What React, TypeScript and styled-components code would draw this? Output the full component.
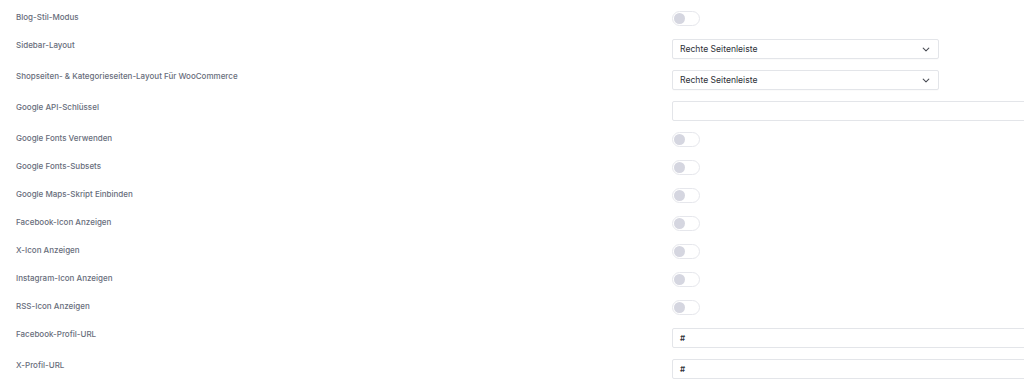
import React from "react";
import styled, { createGlobalStyle } from "styled-components";

const Global = createGlobalStyle`
  html, body { margin: 0; padding: 0; background: #ffffff; }
  body { font-family: Inter, "Noto Sans", sans-serif; overflow: hidden; }
`;

const Page = styled.div`
  display: flex;
  flex-direction: column;
  padding: 11px 0 0 16px;
  width: 1008px;
`;

const Row = styled.div<{ $kind: "toggle" | "field" }>`
  display: flex;
  align-items: flex-start;
  padding-bottom: ${(p) => (p.$kind === "toggle" ? "13px" : "11px")};
`;

const Label = styled.div`
  width: 656px;
  flex-shrink: 0;
  font-size: 8px;
  line-height: 11px;
  font-weight: 500;
  color: #676d7b;
  margin-top: 1px;
`;

const Switch = styled.div`
  box-sizing: border-box;
  width: 28px;
  height: 15px;
  border: 1px solid #e6e7ec;
  border-radius: 8px;
  background: #ffffff;
  display: flex;
  align-items: center;
  padding-left: 1px;
`;

const Knob = styled.span`
  width: 11px;
  height: 11px;
  border-radius: 50%;
  background: #d5d6e0;
`;

const Select = styled.div`
  box-sizing: border-box;
  width: 267px;
  height: 20px;
  border: 1px solid #e3e5e9;
  border-radius: 2px;
  background: #fff;
  display: flex;
  align-items: center;
  justify-content: space-between;
  padding: 0 8px 0 7px;
  font-size: 8.6px;
  color: #2e3138;
  box-shadow: 0 1px 1px rgba(0, 0, 0, 0.02);
`;

const Input = styled.div`
  box-sizing: border-box;
  width: 400px;
  height: 20px;
  border: 1px solid #e3e5e9;
  border-radius: 2px;
  background: #fff;
  display: flex;
  align-items: center;
  padding: 0 7px;
  font-size: 8px;
  font-weight: 600;
  color: #2e3138;
  flex-shrink: 0;
`;

const Chevron = () => (
  <svg width="8" height="5" viewBox="0 0 8 5" fill="none">
    <path d="M1.2 1.2l2.8 2.6 2.8-2.6" stroke="#4a4d55" strokeWidth="1.1" strokeLinecap="round" strokeLinejoin="round" />
  </svg>
);

type Item =
  | { label: string; type: "toggle" }
  | { label: string; type: "select"; value: string }
  | { label: string; type: "input"; value: string };

const items: Item[] = [
  { label: "Blog-Stil-Modus", type: "toggle" },
  { label: "Sidebar-Layout", type: "select", value: "Rechte Seitenleiste" },
  { label: "Shopseiten- & Kategorieseiten-Layout Für WooCommerce", type: "select", value: "Rechte Seitenleiste" },
  { label: "Google API-Schlüssel", type: "input", value: "" },
  { label: "Google Fonts Verwenden", type: "toggle" },
  { label: "Google Fonts-Subsets", type: "toggle" },
  { label: "Google Maps-Skript Einbinden", type: "toggle" },
  { label: "Facebook-Icon Anzeigen", type: "toggle" },
  { label: "X-Icon Anzeigen", type: "toggle" },
  { label: "Instagram-Icon Anzeigen", type: "toggle" },
  { label: "RSS-Icon Anzeigen", type: "toggle" },
  { label: "Facebook-Profil-URL", type: "input", value: "#" },
  { label: "X-Profil-URL", type: "input", value: "#" },
];

export default function App() {
  return (
    <>
      <Global />
      <Page>
        {items.map((it) => (
          <Row key={it.label} $kind={it.type === "toggle" ? "toggle" : "field"}>
            <Label>{it.label}</Label>
            {it.type === "toggle" && (
              <Switch>
                <Knob />
              </Switch>
            )}
            {it.type === "select" && (
              <Select>
                <span>{it.value}</span>
                <Chevron />
              </Select>
            )}
            {it.type === "input" && <Input>{it.value}</Input>}
          </Row>
        ))}
      </Page>
    </>
  );
}
